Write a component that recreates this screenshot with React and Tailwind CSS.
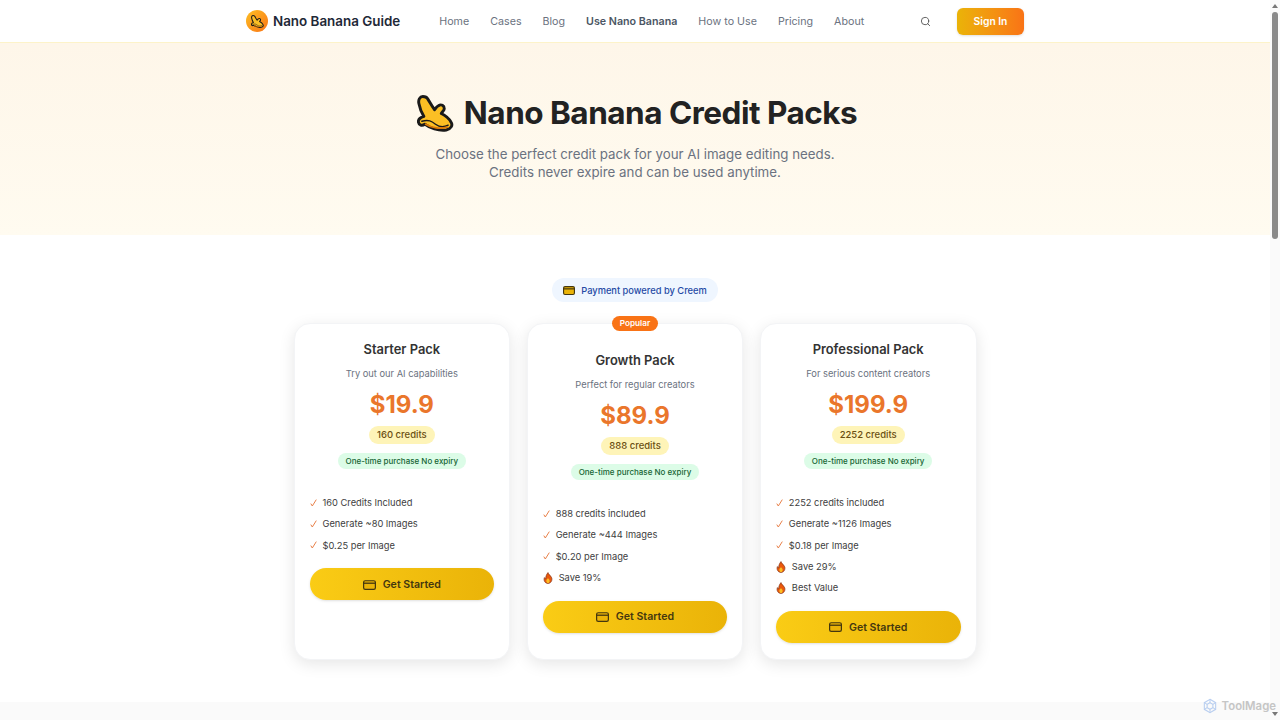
import React from "react";

const navLinks = ["Home", "Cases", "Blog", "Use Nano Banana", "How to Use", "Pricing", "About"];

const packs = [
  {
    name: "Starter Pack",
    desc: "Try out our AI capabilities",
    price: "$19.9",
    credits: "160 credits",
    features: ["160 Credits Included", "Generate ~80 Images", "$0.25 per Image"],
    extras: [],
  },
  {
    name: "Growth Pack",
    desc: "Perfect for regular creators",
    price: "$89.9",
    credits: "888 credits",
    popular: true,
    features: ["888 credits included", "Generate ~444 Images", "$0.20 per Image"],
    extras: ["Save 19%"],
  },
  {
    name: "Professional Pack",
    desc: "For serious content creators",
    price: "$199.9",
    credits: "2252 credits",
    features: ["2252 credits included", "Generate ~1126 Images", "$0.18 per Image"],
    extras: ["Save 29%", "Best Value"],
  },
];

const Banana = ({ className }) => (
  <svg viewBox="0 0 38 38" className={className}>
    <path
      d="M6 1.500C3 1.500 1 5 2 9C3 14 5 19 7 22C4 23 1 25 1.500 28C2 31 5 32 8 30C13 34 22 37 30 36C35 35 37 31 35 28C33 24 29 21 25 19C26 17 28 16 28 14C28 11 25 9 22 11C20 12 19 14 18 15C15 11 13 7 11 4C10 2 8 1.500 6 1.500z"
      fill="#fbbf24"
      stroke="#1a1a1a"
      strokeWidth="3"
      strokeLinejoin="round"
    />
    <path d="M5 27C12 25 15 27 19 30C23 33 28 33 32 31" fill="none" stroke="#1a1a1a" strokeWidth="1.500" strokeLinecap="round" />
    <path d="M9 30C15 34 24 35 31 33" fill="none" stroke="#d97706" strokeWidth="2" strokeLinecap="round" />
  </svg>
);

const CardIcon = ({ className }) => (
  <svg viewBox="0 0 16 12" className={className}>
    <rect x="0.75" y="0.75" width="14.5" height="10.5" rx="2" fill="#eab308" stroke="#44370f" strokeWidth="1.5" />
    <rect x="1" y="3" width="14" height="1.6" fill="#44370f" />
  </svg>
);

const Check = () => (
  <svg viewBox="0 0 7 8" className="w-[7px] h-[8px] shrink-0" fill="none" stroke="#e8814a" strokeWidth="1">
    <path d="M.8 4.600 2.300 7 6.300.6" />
  </svg>
);

const Flame = () => (
  <svg viewBox="0 0 12 14" className="w-[10px] h-[12px] shrink-0">
    <path d="M6 .5c.5 2 3 3.500 4.300 6C11.500 9 10 13.500 6 13.500S.5 9.500 1.700 6.500c.5 1 1 1.500 1.600 1.700C3 5 4.500 2.500 6 .5z" fill="#ea580c" stroke="#7c2d12" strokeWidth=".8" />
    <path d="M6 7c.5 1 2 2 2 3.500S7 13 6 13s-2-1-2-2.500S5.500 8 6 7z" fill="#fbbf24" />
  </svg>
);

const PackCard = ({ pack }) => (
  <div className={`relative flex flex-col items-center bg-white rounded-[16px] border border-gray-100 shadow-[0_4px_16px_rgba(0,0,0,0.1)] px-[15px] pb-4 ${pack.popular ? "pt-[27px]" : "pt-[16px]"}`}>
    {pack.popular && (
      <span className="absolute -top-[8px] left-1/2 -translate-x-1/2 h-[15px] w-[46px] flex items-center justify-center rounded-full bg-[#f97316] text-white text-[8.2px] font-semibold leading-none">
        Popular
      </span>
    )}
    <h3 className="text-[12.9px] leading-[20px] font-semibold text-[#333333]">{pack.name}</h3>
    <p className="mt-[7px] text-[9.3px] leading-[14px] text-[#6b7280]">{pack.desc}</p>
    <div className="mt-[7px] text-[24px] leading-[34px] font-bold text-[#ea762b]">{pack.price}</div>
    <span className="mt-[4px] h-[18px] px-[8px] flex items-center rounded-full bg-[#fef4b8] text-[#6b4f12] text-[9.5px] font-medium">{pack.credits}</span>
    <span className="mt-[9px] h-[16px] px-[8px] flex items-center rounded-full bg-[#dcfce7] text-[#166534] text-[8px] font-medium">One-time purchase No expiry</span>
    <ul className="mt-[23px] w-full flex flex-col">
      {pack.features.map((f) => (
        <li key={f} className="h-[21.4px] flex items-center gap-[6px] text-[9.3px] text-[#404040]">
          <Check />
          <span>{f}</span>
        </li>
      ))}
      {pack.extras.map((f) => (
        <li key={f} className="h-[21.4px] flex items-center gap-[6px] text-[9.3px] text-[#404040]">
          <Flame />
          <span>{f}</span>
        </li>
      ))}
    </ul>
    <button className="mt-[12px] w-full h-[32px] pt-[1px] flex items-center justify-center gap-[7px] rounded-full bg-gradient-to-r from-[#facc15] to-[#eab308] text-[#44370f] text-[10.6px] font-semibold shadow-sm">
      <CardIcon className="w-[13px] h-[10px]" />
      Get Started
    </button>
  </div>
);

export default function App() {
  return (
    <div className="flex h-screen overflow-hidden bg-white" style={{ fontFamily: "Inter, sans-serif" }}>
      <div className="relative flex-1 min-w-0 flex flex-col">
        <header className="h-[43px] shrink-0 border-b border-[#fdf3c9] flex justify-center">
          <div className="w-[778px] flex items-center">
            <div className="w-[22px] h-[22px] rounded-full bg-gradient-to-br from-[#fbbf24] to-[#f97316] flex items-center justify-center">
              <Banana className="w-[13px] h-[13px]" />
            </div>
            <span className="ml-[5px] text-[13.4px] font-semibold text-[#1f2937]">Nano Banana Guide</span>
            <nav className="ml-[39px] pt-[2px] flex items-center gap-[21px]">
              {navLinks.map((l) => (
                <span key={l} className={`text-[10.7px] ${l === "Use Nano Banana" ? "font-semibold text-[#4b5563]" : "text-[#6b7280]"}`}>
                  {l}
                </span>
              ))}
            </nav>
            <svg viewBox="0 0 24 24" className="ml-auto w-[11px] h-[11px]" fill="none" stroke="#555" strokeWidth="2" strokeLinecap="round">
              <circle cx="11" cy="11" r="8" />
              <path d="m21 21-4.300-4.300" />
            </svg>
            <button className="ml-[26px] w-[67px] h-[27px] pt-[1px] flex items-center justify-center rounded-[6px] bg-gradient-to-r from-[#eab308] to-[#f97316] text-white text-[10.3px] font-semibold shadow-sm">
              Sign In
            </button>
          </div>
        </header>

        <section className="h-[192px] shrink-0 bg-gradient-to-b from-[#fef6e9] to-[#fffbf0] flex flex-col items-center pt-[48px]">
          <div className="pl-[4px] flex items-center gap-[10px]">
            <Banana className="w-[37px] h-[37px]" />
            <h1 className="text-[31.5px] leading-[44px] font-bold tracking-[-0.5px] text-[#222222]">Nano Banana Credit Packs</h1>
          </div>
          <p className="mt-[10px] text-[13.3px] leading-[18px] text-[#6b7280] text-center">
            Choose the perfect credit pack for your AI image editing needs.
            <br />
            Credits never expire and can be used anytime.
          </p>
        </section>

        <section className="flex-1 flex flex-col items-center pt-[43px]">
          <div className="h-[24px] w-[166px] pt-[1px] flex items-center justify-center gap-[6px] rounded-full bg-[#eff6ff] text-[#254aa5] text-[9.3px] font-medium">
            <CardIcon className="w-[12px] h-[9px]" />
            Payment powered by Creem
          </div>
          <div className="mt-[21px] w-[683px] h-[336px] grid grid-cols-3 gap-[16.500px]">
            {packs.map((p) => (
              <PackCard key={p.name} pack={p} />
            ))}
          </div>
        </section>

        <div className="h-[18px] shrink-0 bg-[#fafafa]" />

        <div className="absolute right-[-6px] bottom-[5px] flex items-center gap-[4px] opacity-80">
          <svg viewBox="0 0 24 24" className="w-[16px] h-[16px]" fill="none" stroke="#a9c4ee" strokeWidth="1.6">
            <path d="M12 2l8.500 5v10L12 22l-8.500-5V7z" />
            <path d="M12 7l4.300 2.500v5L12 17l-4.300-2.500v-5z" />
            <path d="M12 2v5M20.500 7l-4.200 2.500M20.500 17l-4.200-2.500M12 22v-5M3.500 17l4.200-2.500M3.500 7l4.200 2.500" />
          </svg>
          <span className="text-[11.4px] font-semibold text-[#b8b8b8]">ToolMage</span>
        </div>
      </div>

      <aside className="w-[10px] shrink-0 bg-[#fafafa] flex flex-col items-center">
        <div className="mt-[4px] w-0 h-0 border-x-[3px] border-x-transparent border-b-[4px] border-b-[#777]" />
        <div className="mt-[4px] w-[6px] h-[227px] rounded-full bg-[#8a8a8a]" />
        <div className="flex-1" />
        <div className="mb-[4px] w-0 h-0 border-x-[3px] border-x-transparent border-t-[4px] border-t-[#777]" />
      </aside>
    </div>
  );
}
